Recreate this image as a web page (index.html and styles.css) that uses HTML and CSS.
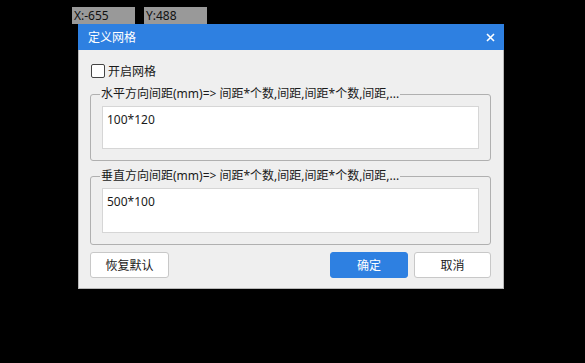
FILE: index.html
```html
<!DOCTYPE html>
<html lang="zh-CN">
<head>
    <meta charset="UTF-8">
    <title>定义网格</title>
    <link rel="stylesheet" href="styles.css">
</head>
<body>
    <div class="coords">
        <span class="coord">X:-655</span>
        <span class="coord">Y:488</span>
    </div>

    <div class="dialog">
        <div class="dialog-title">
            <span>定义网格</span>
            <svg class="close" width="9" height="9" viewBox="0 0 9 9">
                <path d="M1 1 L8 8 M8 1 L1 8" stroke="#fff" stroke-width="1.6" fill="none"/>
            </svg>
        </div>

        <div class="dialog-body">
            <label class="check-row">
                <input type="checkbox" class="check">
                <span>开启网格</span>
            </label>

            <fieldset class="group">
                <legend>水平方向间距(mm)=&gt; 间距*个数,间距,间距*个数,间距,...</legend>
                <textarea class="spacing">100*120</textarea>
            </fieldset>

            <fieldset class="group group-v">
                <legend>垂直方向间距(mm)=&gt; 间距*个数,间距,间距*个数,间距,...</legend>
                <textarea class="spacing tall">500*100</textarea>
            </fieldset>

            <div class="actions">
                <button class="btn reset">恢复默认</button>
                <button class="btn primary">确定</button>
                <button class="btn cancel">取消</button>
            </div>
        </div>
    </div>
</body>
</html>
```

FILE: styles.css
```css
body {
    margin: 0;
    background-color: #000;
    font-family: "Noto Sans", "Noto Sans CJK SC", sans-serif;
    font-size: 12px;
    color: #1a1a1a;
}

.coords {
    display: flex;
    gap: 9px;
    padding: 7px 0 0 72px;
}

.coord {
    width: 61px;
    height: 17px;
    padding-left: 2px;
    background-color: #999;
    color: #111;
    font-size: 12px;
    line-height: 18px;
}

.dialog {
    width: 426px;
    margin-left: 78px;
}

.dialog-title {
    display: flex;
    align-items: center;
    justify-content: space-between;
    height: 26px;
    padding: 0 10px;
    background-color: #2e80e1;
    color: #fff;
}

.close {
    margin-right: -1px;
}

.dialog-body {
    display: flex;
    flex-direction: column;
    background-color: #efefef;
    border: 1px solid #b8b8b8;
    border-top: none;
    padding: 13px 12px 10px 11px;
}

.check-row {
    display: flex;
    align-items: center;
    gap: 3px;
    height: 16px;
    padding-left: 1px;
}

.check {
    appearance: none;
    width: 14px;
    height: 14px;
    margin: 0;
    background-color: #fff;
    border: 1px solid #444;
    border-radius: 2px;
}

.group {
    margin: 7px 0 0 0;
    padding: 4px 11px 11px 11px;
    border: 1px solid #b0b0b0;
    border-radius: 3px;
}

.group legend {
    margin-left: -2px;
    padding: 0 1px;
    line-height: 16px;
}

.group-v {
    margin-top: 7px;
}

.spacing {
    display: block;
    width: 100%;
    height: 43px;
    margin: 0;
    padding: 5px 4px;
    box-sizing: border-box;
    background-color: #fff;
    border: 1px solid #d6d6d6;
    font-family: "Noto Sans", "Noto Sans CJK SC", sans-serif;
    font-size: 12px;
    line-height: 16px;
    color: #1a1a1a;
    resize: none;
}

.spacing.tall {
    height: 45px;
}

.actions {
    display: flex;
    gap: 6px;
    margin-top: 7px;
}

.btn {
    height: 26px;
    padding: 0;
    background-color: #fff;
    border: 1px solid #c8c8c8;
    border-radius: 3px;
    font-family: "Noto Sans", "Noto Sans CJK SC", sans-serif;
    font-size: 12px;
    color: #1a1a1a;
}

.reset {
    width: 79px;
    margin-right: auto;
}

.primary {
    width: 78px;
    background-color: #2e80e1;
    border-color: #2e80e1;
    color: #fff;
}

.cancel {
    width: 77px;
}
```
